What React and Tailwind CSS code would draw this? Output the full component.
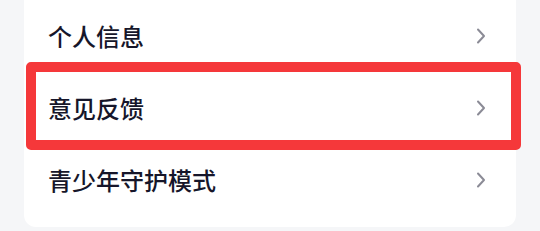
import React from 'react';

const ITEMS = ['个人信息', '意见反馈', '青少年守护模式'];

function Chevron() {
  return (
    <svg width="10" height="16" viewBox="0 0 10 16" fill="none" className="shrink-0">
      <path d="M2 1.5 L8 8 L2 14.5" stroke="#8b8b96" strokeWidth="2" strokeLinecap="round" strokeLinejoin="round" />
    </svg>
  );
}

export default function App() {
  return (
    <div
      className="relative w-[540px] h-[231px] overflow-hidden bg-[#f5f6f8]"
      style={{ fontFamily: '"Noto Sans CJK SC", "Noto Sans", sans-serif' }}
    >
      <div className="ml-[24px] w-[492px] bg-white rounded-b-[12px] pb-[11px]">
        {ITEMS.map((label) => (
          <div key={label} className="h-[72px] flex items-center justify-between pl-[24px] pr-[30px]">
            <span className="text-[24px] font-[450] text-[#16162a] leading-none">{label}</span>
            <Chevron />
          </div>
        ))}
      </div>

      {/* highlight frame */}
      <div className="absolute left-[26px] top-[62px] w-[495px] h-[88px] border-[10px] border-[#f5383a] rounded-[5px]" />
    </div>
  );
}
